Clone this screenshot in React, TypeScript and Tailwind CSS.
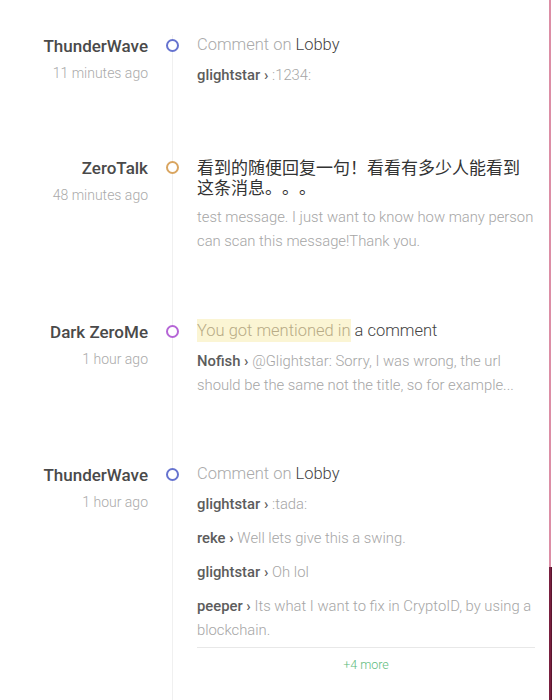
import type { ReactNode } from 'react';

type Comment = { user: string; text: string };

type Item = {
  name: string;
  time: string;
  dot: string;
  space: string;
  titleClass: string;
  title: ReactNode;
  comments: Comment[];
  more?: string;
};

const items: Item[] = [
  {
    name: 'ThunderWave',
    time: '11 minutes ago',
    dot: 'border-[#6673cf]',
    space: 'pb-[70px]',
    titleClass: 'text-[16.5px]',
    title: (
      <>
        <span className="font-light text-[#aaaaaa]">Comment on </span>
        <span className="font-light text-[#444]">Lobby</span>
      </>
    ),
    comments: [{ user: 'glightstar', text: ':1234:' }],
  },
  {
    name: 'ZeroTalk',
    time: '48 minutes ago',
    dot: 'border-[#d9a560]',
    space: 'pb-[68px]',
    titleClass: "text-[17px] text-[#333] [text-spacing-trim:space-all] [font-family:'Noto_Sans_CJK_SC',sans-serif]",
    title: '看到的随便回复一句！看看有多少人能看到这条消息。。。',
    comments: [
      { user: '', text: 'test message. I just want to know how many person can scan this message!Thank you.' },
    ],
  },
  {
    name: 'Dark ZeroMe',
    time: '1 hour ago',
    dot: 'border-[#b565d6]',
    space: 'pb-[67px]',
    titleClass: 'text-[16.5px]',
    title: (
      <>
        <span className="bg-[#fbf5d4] py-[2px] font-light text-[#b8ab86]">You got mentioned in</span>
        <span className="font-light text-[#444]"> a comment</span>
      </>
    ),
    comments: [
      {
        user: 'Nofish',
        text: '@Glightstar: Sorry, I was wrong, the url should be the same not the title, so for example...',
      },
    ],
  },
  {
    name: 'ThunderWave',
    time: '1 hour ago',
    dot: 'border-[#6673cf]',
    space: 'pb-[40px]',
    titleClass: 'text-[16.5px]',
    title: (
      <>
        <span className="font-light text-[#aaaaaa]">Comment on </span>
        <span className="font-light text-[#444]">Lobby</span>
      </>
    ),
    comments: [
      { user: 'glightstar', text: ':tada:' },
      { user: 'reke', text: 'Well lets give this a swing.' },
      { user: 'glightstar', text: 'Oh lol' },
      { user: 'peeper', text: 'Its what I want to fix in CryptoID, by using a blockchain.' },
    ],
    more: '+4 more',
  },
];

const FeedItem = ({ item }: { item: Item }) => (
  <div className="flex">
    <div className="w-[148px] shrink-0 pt-[1px] text-right">
      <div className="text-[17px] font-medium leading-[20px] text-[#4a4a4a]">{item.name}</div>
      <div className="mt-[7px] text-[14px] font-light leading-[20px] text-[#aaaaaa]">{item.time}</div>
    </div>
    <div className={`relative ml-[24px] flex-1 border-l border-[#f0f0f0] pl-[24px] ${item.space}`}>
      <div className={`absolute left-[-7px] top-[4px] h-[13px] w-[13px] rounded-full border-2 bg-white ${item.dot}`} />
      <div className={`pr-[14px] leading-[20px] ${item.titleClass}`}>{item.title}</div>
      <div className="mt-[8px] pr-[14px]">
        {item.comments.map((c, i) => (
          <p key={i} className="mb-[10px] text-[14.8px] font-light leading-[24px] text-[#a6a6a6] last:mb-0">
            {c.user && <span className="font-medium text-[#5c5c5c]">{c.user} › </span>}
            {c.text}
          </p>
        ))}
      </div>
      {item.more && (
        <div className="mr-[14px] mt-[5px] border-t border-[#e8e8e8] text-center text-[12.5px] font-light leading-[34px] text-[#5dbb7c]">
          {item.more}
        </div>
      )}
    </div>
  </div>
);

export default function App() {
  return (
    <div className="flex h-[700px] w-[552px] overflow-hidden bg-white [font-family:Roboto,'Noto_Sans_CJK_SC',sans-serif]">
      <div className="flex-1 pt-[35px]">
        {items.map((item, i) => (
          <FeedItem key={i} item={item} />
        ))}
      </div>
      <div className="flex w-[3px] flex-col">
        <div className="h-[567px] border-l-2 border-[#dc8ea6] bg-white" />
        <div className="flex-1 border-l-2 border-[#7a2040] bg-[#5a1530]" />
      </div>
    </div>
  );
}
